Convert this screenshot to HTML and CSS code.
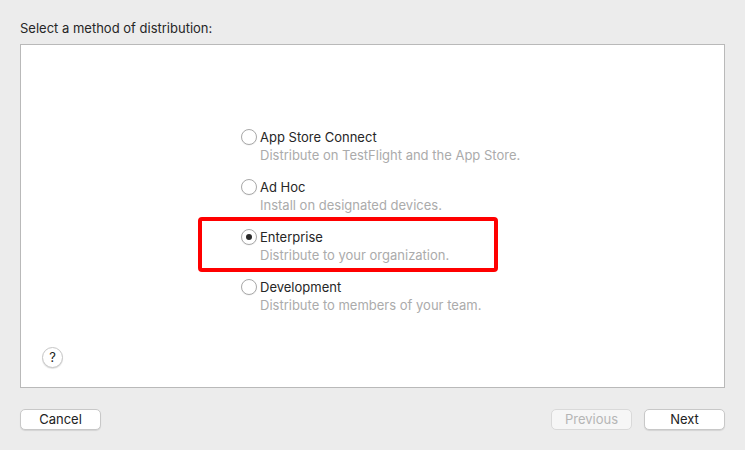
FILE: index.html
```html
<!DOCTYPE html>
<html>
<head>
<meta charset="utf-8">
<link rel="stylesheet" href="styles.css">
</head>
<body>
<div class="title">Select a method of distribution:</div>
<div class="panel">
  <div class="options">
    <div class="option">
      <div class="row"><span class="radio"></span><span class="label">App Store Connect</span></div>
      <div class="desc">Distribute on TestFlight and the App Store.</div>
    </div>
    <div class="option">
      <div class="row"><span class="radio"></span><span class="label">Ad Hoc</span></div>
      <div class="desc">Install on designated devices.</div>
    </div>
    <div class="option">
      <div class="highlight"></div>
      <div class="row"><span class="radio checked"></span><span class="label">Enterprise</span></div>
      <div class="desc">Distribute to your organization.</div>
    </div>
    <div class="option">
      <div class="row"><span class="radio"></span><span class="label">Development</span></div>
      <div class="desc">Distribute to members of your team.</div>
    </div>
  </div>
  <div class="help">?</div>
</div>
<div class="buttons">
  <button class="btn">Cancel</button>
  <div class="right">
    <button class="btn disabled">Previous</button>
    <button class="btn">Next</button>
  </div>
</div>
</body>
</html>
```
FILE: styles.css
```css
* { box-sizing: border-box; }
body {
  margin: 0;
  background: #ececec;
  font-family: Inter, "Noto Sans", sans-serif;
  font-size: 13px;
  color: #262626;
  width: 745px;
  height: 450px;
  overflow: hidden;
}
.title {
  margin: 20px 20px 0;
  line-height: 16px;
  height: 16px;
}
.panel {
  margin: 8px 20px 0;
  height: 344px;
  background: #fff;
  border: 1px solid #b9b9b9;
  display: flex;
  flex-direction: column;
  padding: 84px 0 19px 21px;
}
.options {
  margin-left: 199px;
  display: flex;
  flex-direction: column;
  gap: 16px;
}
.option { position: relative; }
.row {
  display: flex;
  align-items: center;
  height: 16px;
}
.radio {
  width: 16px;
  height: 16px;
  border-radius: 50%;
  border: 1px solid #a9a9a9;
  background: #fff;
  margin-right: 3px;
  display: flex;
  align-items: center;
  justify-content: center;
  box-shadow: 0 0.5px 1px rgba(0,0,0,0.08);
}
.radio.checked::after {
  content: "";
  width: 6px;
  height: 6px;
  border-radius: 50%;
  background: #2a2a2a;
}
.label { line-height: 16px; }
.desc {
  margin-top: 2px;
  margin-left: 19px;
  line-height: 16px;
  color: #ababab;
}
.highlight {
  position: absolute;
  left: -43px;
  top: -12px;
  width: 300px;
  height: 55px;
  border: 4px solid #ff0000;
  border-radius: 4px;
}
.help {
  margin-top: auto;
  width: 21px;
  height: 21px;
  border-radius: 50%;
  background: #fff;
  border: 1px solid #c6c6c6;
  box-shadow: 0 1px 1px rgba(0,0,0,0.12);
  display: flex;
  align-items: center;
  justify-content: center;
  font-size: 13px;
  line-height: 1;
  color: #222;
}
.buttons {
  margin: 21px 20px 0;
  display: flex;
  justify-content: space-between;
}
.right { display: flex; gap: 12px; }
.btn {
  width: 81px;
  height: 21px;
  padding: 0;
  font-family: inherit;
  font-size: 13px;
  color: #222;
  background: #fff;
  border: 1px solid #c8c8c8;
  border-radius: 5px;
  box-shadow: 0 1px 1px rgba(0,0,0,0.1);
  line-height: 19px;
}
.btn.disabled {
  background: #f6f6f6;
  color: #b5b5b5;
  border-color: #d9d9d9;
  box-shadow: none;
}
```
